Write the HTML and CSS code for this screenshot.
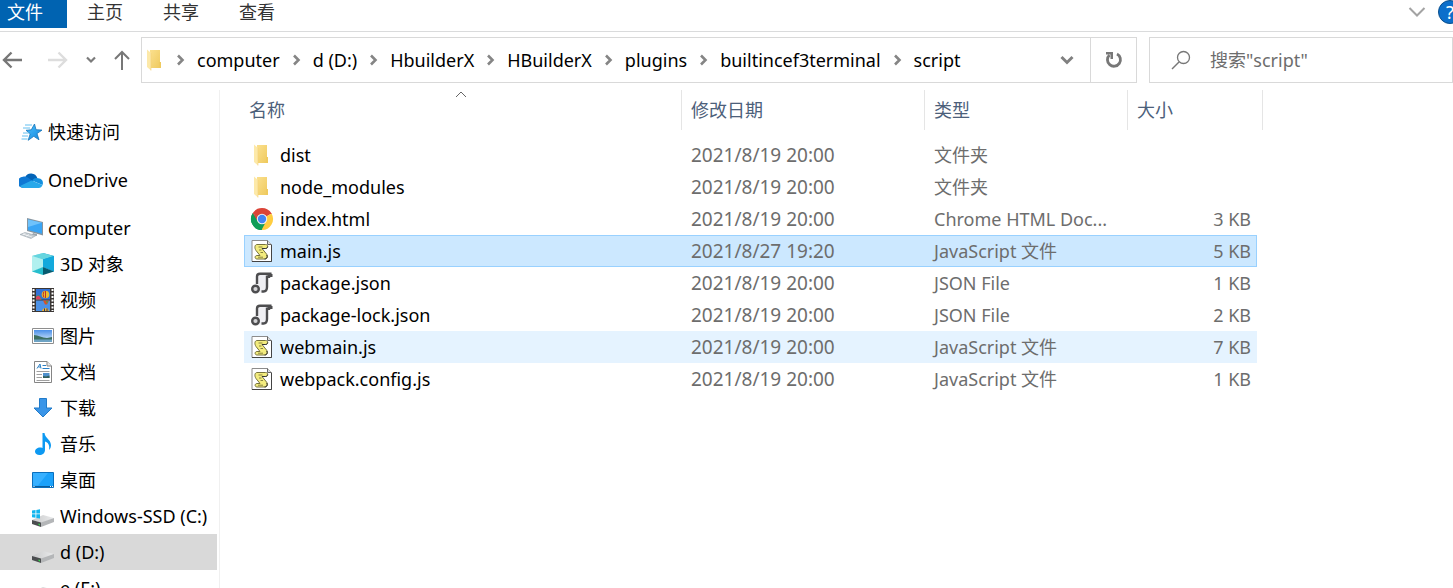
FILE: index.html
```html
<!DOCTYPE html>
<html lang="zh-CN">
<head>
  <meta charset="UTF-8" />
  <title>script</title>
  <link rel="stylesheet" href="styles.css">
</head>
<body>
  <!-- icon set -->
  <svg class="sprite" aria-hidden="true">
    <defs>
      <linearGradient id="gFolder" x1="0" y1="0" x2="1" y2="1">
        <stop offset="0" stop-color="#fbe08e" /><stop offset="1" stop-color="#efca5f" />
      </linearGradient>
      <linearGradient id="gBlue" x1="0" y1="0" x2="1" y2="1">
        <stop offset="0" stop-color="#4cc2ff" /><stop offset="1" stop-color="#0f84dc" />
      </linearGradient>
      <linearGradient id="gSky" x1="0" y1="0" x2="0" y2="1">
        <stop offset="0" stop-color="#4a8fe8" /><stop offset="1" stop-color="#e4f2fb" />
      </linearGradient>
      <linearGradient id="gDisk" x1="0" y1="0" x2="1" y2="0">
        <stop offset="0" stop-color="#c9cacb" /><stop offset="1" stop-color="#e9eaeb" />
      </linearGradient>
    </defs>
    <symbol id="folder" viewBox="0 0 24 24">
      <path d="M7 2h10v18H7z" fill="url(#gFolder)" />
      <path d="M16 14h2v6h-2z" fill="#efca5f" />
      <path d="M4 1.500l4 3.500v17.500l-4-3.500z" fill="#fde9a9" />
      <path d="M8 5v17.500" stroke="#f3d27a" stroke-width=".6" />
    </symbol>
    <symbol id="chrome" viewBox="0 0 24 24">
      <path d="M12 12L2.470 6.500A11 11 0 0 1 21.530 6.500z" fill="#db4437" />
      <path d="M12 12L2.470 6.500A11 11 0 0 0 12 23z" fill="#0f9d58" />
      <path d="M12 12V23A11 11 0 0 0 21.530 6.500z" fill="#ffcd40" />
      <path d="M12 7h9.800L21 6H12zM7.670 14.500L2.470 6.500 7 9z" fill="#db4437" />
      <path d="M7.670 14.500L12 12l4.330 2.500L12 23z" fill="#ffcd40" />
      <path d="M2.800 6.500L7.670 14.500 12 17l3-.5L11.500 23A11 11 0 0 1 2.800 6z" fill="#0f9d58" />
      <circle cx="12" cy="12" r="5.200" fill="#f1f1f1" />
      <circle cx="12" cy="12" r="4.200" fill="#4285f4" />
    </symbol>
    <symbol id="js" viewBox="0 0 24 24">
      <path d="M2 1.500h15.500l4 4v17H2z" fill="#fff" stroke="#8c8c8c" />
      <path d="M17.500 1.500v4h4" fill="#ddd" stroke="#666" />
      <path d="M21.500 6v16.500H2" fill="none" stroke="#444" />
      <path d="M7 5.500h8.500c3 0 3 4 0 4H12l4.500 5.500c2 2.500 1 5-2 5H7c-2.500 0-2.500-3.500 0-3.500h3l-4-5C4 8.500 5 5.500 7 5.500z" fill="#f3ec7e" stroke="#77733c" />
      <path d="M8.500 8h4M9 11h2.500M10.500 13.500H13M8 18.200h5" stroke="#8a8440" fill="none" />
      <path d="M12 9.500h3.500c1.500 0 2-1 2-2M16.800 16c.8 2.500 0 4-2.300 4" stroke="#333" fill="none" />
    </symbol>
    <symbol id="json" viewBox="0 0 24 24">
      <path d="M7.500 4h10v12c0 4-1.500 5.500-4 5.500H9z" fill="#efeff3" />
      <path d="M7 13V5.500c0-2 1-2.800 3-2.800h11.500c-1.500.2-2.500 1-2.500 3h-2V16c0 3-1 4.500-3.500 4.500h-2" fill="none" stroke="#4d4d4f" stroke-width="2.400" />
      <path d="M17.500 5.500V3h5v3h-5z" fill="#4d4d4f" />
      <circle cx="5.500" cy="18" r="3.300" fill="#d3d3d5" stroke="#4d4d4f" stroke-width="2.400" />
    </symbol>
    <symbol id="star" viewBox="0 0 24 24">
      <path d="M15.500 4l1.500 5.700 6 .4-5 3.500 2 6.200-5.200-3.500-5.600 4 2-6.500L7 10.300l5.300-.5z" fill="url(#gBlue)" stroke="#1673b8" stroke-width=".8" />
      <path d="M6 5h7M4 8h7M4 13h6M3 16h6M2.500 19h6" stroke="#63bff0" />
    </symbol>
    <symbol id="cloud" viewBox="0 0 24 24">
      <path d="M6 9.500a6.500 6.500 0 0 1 12.300.6L11 15z" fill="#0364b8" />
      <path d="M4.500 20A5.200 5.200 0 0 1 4 8.700c2.500-.7 4 .3 5.500 1.200L15 14z" fill="#0f78d4" />
      <path d="M13 12.500c2-2.500 4-3 6-2.300a4.800 4.800 0 0 1 4.500 6.800z" fill="#1490df" />
      <path d="M1 18L12.500 12.500l11 4.500c-.7 2-2 3-3.700 3h-15c-1.800 0-3-.8-3.800-2z" fill="#28a8ea" />
    </symbol>
    <symbol id="computer" viewBox="0 0 24 24">
      <path d="M8 2l16 4v13.500L8 15z" fill="#8795a0" />
      <path d="M9 3.500l14 3.300v11L9 14z" fill="#3aa5f5" />
      <path d="M9 3.500l14 3.300L9 11z" fill="#6fc2fb" />
      <path d="M14 17l4 1v2l-5-1z" fill="#9ba5ad" />
      <path d="M1 18.500l5-2 11 3-5 3z" fill="#c4ccd2" stroke="#9ba5ad" stroke-width=".6" />
      <path d="M4 18l9 3M6.500 17.300l-3 1.500M10 18.500l-3 1.500" stroke="#fff" stroke-width=".6" />
    </symbol>
    <symbol id="cube" viewBox="0 0 24 24">
      <path d="M1 4l11-3v14L1 19.500z" fill="#87e0e5" />
      <path d="M12 1l11 3v15.500L12 15z" fill="#0f96d2" />
      <path d="M1 4l11-3 11 3-11 3.500z" fill="#66d5df" />
      <path d="M1 4l11 3.500V15L1 19.500z" fill="#b1f0ef" />
      <path d="M12 7.500L23 4v15.500L12 15z" fill="#13a9dc" />
      <path d="M1 19.500L12 15v8z" fill="#27becd" />
      <path d="M12 15l11 4.500L12 23z" fill="#075b70" />
    </symbol>
    <symbol id="video" viewBox="0 0 24 24">
      <path d="M1 0h22v24H1z" fill="#3b3634" />
      <path d="M5 1h14v10.500H5z" fill="#3271d6" />
      <path d="M5 12.500h14V23H5z" fill="#4b91e6" />
      <path d="M2.500 1v22M21.500 1v22" stroke="#fff" stroke-width="2" stroke-dasharray="2 1.500" />
      <path d="M5 11.500V8l3-1 3 4.500z" fill="#39a358" />
      <path d="M5 9.500c1-2.500 4-2.500 5 2H5z" fill="#dd3f62" />
      <circle cx="14.500" cy="6.500" r="3.800" fill="#e9bd2d" />
      <path d="M14.500 3v7M13 3.500c-1 2-1 4 0 6" fill="none" stroke="#c33128" />
      <path d="M12 12.500h6l-2 4h-2z" fill="#d85027" />
      <path d="M15 13h2l-1 3z" fill="#39a358" />
      <path d="M11 23c1-4 6-4 7 0z" fill="#f0b32c" />
      <path d="M13.500 20.500V23M16 20.500V23" stroke="#29356f" />
    </symbol>
    <symbol id="picture" viewBox="0 0 24 24">
      <path d="M1.500 4.500h21v15h-21z" fill="#fff" stroke="#8e8e8e" />
      <path d="M3 6h18v12H3z" fill="url(#gSky)" />
      <path d="M3 11c4 0 8 3 13 3l5-1v3H3z" fill="#3d6f62" />
      <path d="M3 15.500h18V18H3z" fill="#6ea3c4" />
    </symbol>
    <symbol id="document" viewBox="0 0 24 24">
      <path d="M3.500 1.500H16l4.500 4.500v16.500h-17z" fill="#fff" stroke="#858585" />
      <path d="M16 1.500V6h4.500" fill="#e8e8e8" stroke="#858585" />
      <path d="M6 8.500l3-4.500 1 4.500M7.500 7h2" fill="none" stroke="#2a7fc4" />
      <path d="M11.500 5.500H15M11.500 8.500h7" stroke="#2a7fc4" />
      <path d="M5.500 11.500h13M5.500 14.500H11M5.500 17.500H11M5.500 20.500h13" stroke="#a0a0a0" />
      <path d="M12 13h6.500v5H12z" fill="#4e90cc" />
      <path d="M12 16l3 .5 3.500-1V18H12z" fill="#325f5b" />
    </symbol>
    <symbol id="download" viewBox="0 0 24 24">
      <path d="M8.500 2.500h7V12h5.500L12 21 3 12h5.500z" fill="#3a95e8" stroke="#217bc9" />
    </symbol>
    <symbol id="music" viewBox="0 0 24 24">
      <path d="M11.500 1h2c.5 5 6 6 6.500 12 0 2-.7 4-2 5 1-5-1-7.500-4-8.500V18c0 3-2.500 5-5.500 5C6 23 4 21.500 4 19.500c0-3 4-5 7.500-3.500z" fill="#0d99f2" />
    </symbol>
    <symbol id="desktop" viewBox="0 0 24 24">
      <path d="M1.500 4.500h21v15h-21z" fill="#1ba1fa" stroke="#0a6fbd" />
      <path d="M2 5h15L7 17.500H2z" fill="#37b0ff" />
      <path d="M2 18.500h20" stroke="#0b5c9b" />
      <path d="M2.500 18.500h1M19 18.500h1M21 18.500h1" stroke="#fff" />
    </symbol>
    <symbol id="disk" viewBox="0 0 24 24">
      <path d="M1 16l11-5 11 3-12 5z" fill="url(#gDisk)" />
      <path d="M1 16l9 2.500V23l-9-3z" fill="#4b4d4f" />
      <path d="M10 18.500l13-4.500v4L10 23z" fill="#b4b6b8" />
      <path d="M7.500 19.500l1.500.5v1.500L7.500 21z" fill="#35d94b" />
    </symbol>
    <symbol id="windisk" viewBox="0 0 24 24">
      <use href="#disk" />
      <path d="M1 3.500l3.500-.5v3.500H1zM5.300 2.900L9 2.300v4.200H5.300zM1 7.300h3.500v3.500L1 10.300zM5.300 7.300H9v4.200l-3.700-.6z" transform="translate(0 3)" fill="#12b5ee" />
    </symbol>
    <symbol id="sep" viewBox="0 0 10 12"><path d="M2 1.500L6.500 6 2 10.500" fill="none" stroke="#858585" stroke-width="2.600" /></symbol>
  </svg>

  <div class="explorer">
    <nav class="ribbon">
      <a class="tab file" href="#">文件</a>
      <a class="tab" href="#">主页</a>
      <a class="tab" href="#">共享</a>
      <a class="tab" href="#">查看</a>
      <div class="ribbon-right">
        <button aria-label="展开功能区"><svg width="18" height="12" viewBox="0 0 18 12"><path d="M1.500 2L9 9.500 16.500 2" fill="none" stroke="#a3a3a3" stroke-width="2" /></svg></button>
        <button class="help" aria-label="帮助">?</button>
      </div>
    </nav>

    <div class="toolbar">
      <div class="history">
        <button aria-label="后退"><svg width="20" height="18" viewBox="0 0 20 18"><path d="M20 9H2M9.500 1.500L2 9l7.500 7.500" fill="none" stroke="#777" stroke-width="2.400" /></svg></button>
        <button aria-label="前进" disabled><svg width="20" height="18" viewBox="0 0 20 18"><path d="M0 9h18M10.500 1.500L18 9l-7.500 7.500" fill="none" stroke="#ddd" stroke-width="2.400" /></svg></button>
        <button aria-label="最近位置"><svg width="10" height="8" viewBox="0 0 10 8"><path d="M1 1.500l4 4 4-4" fill="none" stroke="#7b7b7b" stroke-width="2.200" /></svg></button>
        <button aria-label="向上"><svg width="16" height="20" viewBox="0 0 16 20"><path d="M8 20V2M1 9l7-7 7 7" fill="none" stroke="#777" stroke-width="2" /></svg></button>
      </div>
      <div class="address">
        <svg class="icon"><use href="#folder" /></svg>
        <ol class="crumbs">
          <li><svg class="sep"><use href="#sep" /></svg><a href="#">computer</a></li>
          <li><svg class="sep"><use href="#sep" /></svg><a href="#">d (D:)</a></li>
          <li><svg class="sep"><use href="#sep" /></svg><a href="#">HbuilderX</a></li>
          <li><svg class="sep"><use href="#sep" /></svg><a href="#">HBuilderX</a></li>
          <li><svg class="sep"><use href="#sep" /></svg><a href="#">plugins</a></li>
          <li><svg class="sep"><use href="#sep" /></svg><a href="#">builtincef3terminal</a></li>
          <li><svg class="sep"><use href="#sep" /></svg><a href="#">script</a></li>
        </ol>
        <button class="drop" aria-label="以前的位置"><svg width="14" height="10" viewBox="0 0 14 10"><path d="M1.500 2L7 7.500 12.500 2" fill="none" stroke="#808080" stroke-width="3" /></svg></button>
        <button class="refresh" aria-label="刷新"><svg width="18" height="18" viewBox="0 0 18 18"><path d="M12 3A6.500 6.500 0 1 1 4.500 4" fill="none" stroke="#777" stroke-width="2.800" /><path d="M1 1h7v7H5.500V3.500H1z" fill="#777" /></svg></button>
      </div>
      <label class="search">
        <svg width="20" height="20" viewBox="0 0 20 20"><circle cx="12.500" cy="7.500" r="6" fill="none" stroke="#777" stroke-width="1.300" /><path d="M8 12l-7 7" stroke="#777" stroke-width="1.500" /></svg>
        <input type="text" placeholder='搜索"script"' aria-label="搜索" />
      </label>
    </div>

    <div class="content">
      <aside class="sidebar">
        <a class="root" href="#"><svg class="icon"><use href="#star" /></svg>快速访问</a>
        <a class="root" href="#"><svg class="icon"><use href="#cloud" /></svg>OneDrive</a>
        <a class="root" href="#"><svg class="icon"><use href="#computer" /></svg>computer</a>
        <a href="#"><svg class="icon"><use href="#cube" /></svg>3D 对象</a>
        <a href="#"><svg class="icon"><use href="#video" /></svg>视频</a>
        <a href="#"><svg class="icon"><use href="#picture" /></svg>图片</a>
        <a href="#"><svg class="icon"><use href="#document" /></svg>文档</a>
        <a href="#"><svg class="icon"><use href="#download" /></svg>下载</a>
        <a href="#"><svg class="icon"><use href="#music" /></svg>音乐</a>
        <a href="#"><svg class="icon"><use href="#desktop" /></svg>桌面</a>
        <a href="#"><svg class="icon"><use href="#windisk" /></svg>Windows-SSD (C:)</a>
        <a class="current" href="#"><svg class="icon"><use href="#disk" /></svg>d (D:)</a>
        <a href="#"><svg class="icon"><use href="#disk" /></svg>e (E:)</a>
      </aside>

      <main class="files">
        <table>
          <colgroup>
            <col class="c-name"><col class="c-date"><col class="c-type"><col class="c-size">
          </colgroup>
          <thead>
            <tr>
              <th>名称<svg class="sort" viewBox="0 0 12 7"><path d="M1 6l5-5 5 5" fill="none" stroke="#666" /></svg></th>
              <th>修改日期</th>
              <th>类型</th>
              <th>大小</th>
            </tr>
          </thead>
          <tbody>
            <tr><td><span class="name"><svg class="icon"><use href="#folder" /></svg>dist</span></td><td>2021/8/19 20:00</td><td>文件夹</td><td></td></tr>
            <tr><td><span class="name"><svg class="icon"><use href="#folder" /></svg>node_modules</span></td><td>2021/8/19 20:00</td><td>文件夹</td><td></td></tr>
            <tr><td><span class="name"><svg class="icon"><use href="#chrome" /></svg>index.html</span></td><td>2021/8/19 20:00</td><td>Chrome HTML Doc...</td><td>3 KB</td></tr>
            <tr class="selected"><td><span class="name"><svg class="icon"><use href="#js" /></svg>main.js</span></td><td>2021/8/27 19:20</td><td>JavaScript 文件</td><td>5 KB</td></tr>
            <tr><td><span class="name"><svg class="icon"><use href="#json" /></svg>package.json</span></td><td>2021/8/19 20:00</td><td>JSON File</td><td>1 KB</td></tr>
            <tr><td><span class="name"><svg class="icon"><use href="#json" /></svg>package-lock.json</span></td><td>2021/8/19 20:00</td><td>JSON File</td><td>2 KB</td></tr>
            <tr class="hovered"><td><span class="name"><svg class="icon"><use href="#js" /></svg>webmain.js</span></td><td>2021/8/19 20:00</td><td>JavaScript 文件</td><td>7 KB</td></tr>
            <tr><td><span class="name"><svg class="icon"><use href="#js" /></svg>webpack.config.js</span></td><td>2021/8/19 20:00</td><td>JavaScript 文件</td><td>1 KB</td></tr>
          </tbody>
        </table>
      </main>
    </div>
  </div>
</body>
</html>
```
FILE: styles.css
```css
* {
  box-sizing: border-box;
}
body {
  margin: 0;
  background: #fff;
  color: #000;
  font-family: "Noto Sans", "Noto Sans CJK SC", sans-serif;
  font-size: 18px;
  line-height: 24px;
}
a {
  color: inherit;
  text-decoration: none;
}
button {
  display: flex;
  align-items: center;
  justify-content: center;
  padding: 0;
  border: none;
  background: none;
  font: inherit;
  cursor: pointer;
}
svg {
  flex-shrink: 0;
}
.sprite {
  position: absolute;
  width: 0;
  height: 0;
}
.icon {
  width: 24px;
  height: 24px;
}
.explorer {
  display: flex;
  flex-direction: column;
  height: 100vh;
  overflow: hidden;
}

/* ribbon */
.ribbon {
  display: flex;
  height: 32px;
  flex-shrink: 0;
  border-bottom: 1px solid #dadbdc;
}
.tab {
  height: 28px;
  padding: 0 20px;
  color: #333;
}
.tab.file {
  padding: 0 24px 0 7px;
  background: #0063b1;
  color: #fff;
}
.ribbon-right {
  display: flex;
  align-items: center;
  gap: 12px;
  height: 24px;
  margin-left: auto;
  margin-right: -9px;
}
.help {
  width: 24px;
  height: 24px;
  border: 1px solid #0a4f8c;
  border-radius: 50%;
  background: #0c6fcb;
  color: #fff;
}

/* toolbar */
.toolbar {
  display: flex;
  flex-shrink: 0;
  padding: 5px 0 7px;
}
.history {
  display: flex;
  width: 141px;
  gap: 18px;
  padding: 0 0 0 2px;
}
.history button:nth-child(2) {
  margin-left: 8px;
}
.address {
  display: flex;
  flex: 1;
  align-items: center;
  height: 46px;
  padding-left: 1px;
  border: 1px solid #d9d9d9;
}
.crumbs {
  display: flex;
  flex: 1;
  margin: 0;
  padding: 0 0 0 9px;
  list-style: none;
}
.crumbs li {
  display: flex;
  align-items: center;
}
.crumbs li + li {
  margin-left: 12px;
}
.sep {
  width: 10px;
  height: 12px;
  margin-right: 11px;
}
.drop {
  width: 46px;
  height: 44px;
}
.refresh {
  width: 46px;
  height: 44px;
  border-left: 1px solid #d9d9d9;
}
.search {
  display: flex;
  align-items: center;
  gap: 19px;
  width: 304px;
  height: 46px;
  margin-left: 12px;
  padding: 0 21px;
  border: 1px solid #d9d9d9;
}
.search input {
  flex: 1;
  min-width: 0;
  padding: 0;
  border: none;
  outline: none;
  font: inherit;
}
.search input::placeholder {
  color: #6d6d6d;
}

/* panes */
.content {
  display: flex;
  flex: 1;
  min-height: 0;
}
.sidebar {
  display: flex;
  flex-direction: column;
  width: 220px;
  flex-shrink: 0;
  padding: 24px 2px 0 0;
  border-right: 1px solid #f0f0f0;
  overflow: hidden;
}
.sidebar a {
  display: flex;
  align-items: center;
  flex-shrink: 0;
  gap: 5px;
  height: 36px;
  padding-left: 31px;
  white-space: nowrap;
}
.sidebar .root {
  padding-left: 19px;
}
.sidebar .root + .root {
  margin-top: 12px;
}
.sidebar .current {
  background: #d9d9d9;
}
.files {
  flex: 1;
  padding-left: 24px;
  overflow: hidden;
}
table {
  table-layout: fixed;
  width: 1019px;
  border-spacing: 0;
}
.c-name {
  width: 438px;
}
.c-date {
  width: 243px;
}
.c-type {
  width: 203px;
}
th {
  position: relative;
  height: 40px;
  padding: 0 9px;
  border-right: 1px solid #e5e5e5;
  color: #4c607a;
  font-weight: 400;
  text-align: left;
}
th:first-child {
  padding-left: 5px;
}
.sort {
  position: absolute;
  top: 1px;
  left: 50%;
  width: 12px;
  height: 7px;
  margin-left: -8px;
}
tbody::before {
  content: "";
  display: block;
  height: 9px;
}
td {
  height: 32px;
  padding: 0 9px;
  color: #6d6d6d;
  white-space: nowrap;
}
td:first-child {
  padding-left: 6px;
}
td:nth-child(2) {
  font-size: 19px;
}
td:last-child {
  padding-right: 6px;
  border-right: 6px solid transparent;
  background-clip: padding-box;
  text-align: right;
}
.name {
  display: flex;
  align-items: center;
  gap: 6px;
  color: #000;
}
.hovered td {
  background-color: #e5f3ff;
}
.selected td {
  background-color: #cce8ff;
  box-shadow: inset 0 1px #99d1ff, inset 0 -1px #99d1ff;
}
.selected td:first-child {
  box-shadow: inset 1px 1px #99d1ff, inset 0 -1px #99d1ff;
}
.selected td:last-child {
  box-shadow: inset -1px 1px #99d1ff, inset 0 -1px #99d1ff;
}
```
